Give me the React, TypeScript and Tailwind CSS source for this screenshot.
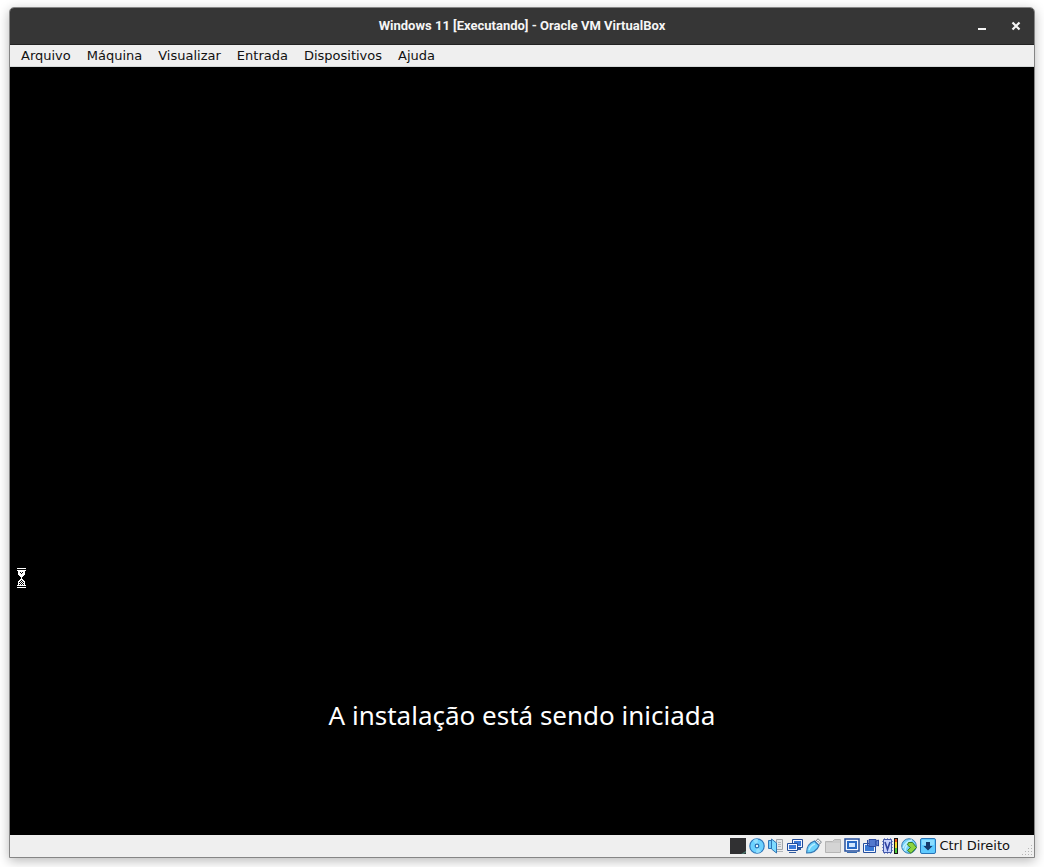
import type { ReactNode } from "react";

const menus = ["Arquivo", "Máquina", "Visualizar", "Entrada", "Dispositivos", "Ajuda"];

function Icon({ children }: { children: ReactNode }) {
  return (
    <svg viewBox="0 0 16 16" className="size-4 block" aria-hidden="true">
      {children}
    </svg>
  );
}

const indicators: { label: string; icon: ReactNode }[] = [
  {
    label: "Discos rígidos",
    icon: (
      <>
        <path d="M0 0h16v16H0z" fill="#303032" />
        <path d="M11 16l5-3v1.500L13.500 16z" fill="#4b7a70" />
      </>
    ),
  },
  {
    label: "Discos ópticos",
    icon: (
      <>
        <circle cx="8" cy="8" r="7.200" fill="#6cd2ff" stroke="#2e79bd" strokeWidth="1.200" />
        <path d="M8 8L4 2.200A7 7 0 0 1 9 1.200zM8 8l4 5.800a7 7 0 0 1-5 1z" fill="#93e0ff" />
        <circle cx="8" cy="8" r="1.800" fill="#eaf7fc" stroke="#286eaf" strokeWidth="1.200" />
      </>
    ),
  },
  {
    label: "Áudio",
    icon: (
      <>
        <path d="M8.500 1.500h6v10h-6z" fill="#e4e6e8" stroke="#a0a4a8" />
        <path d="M10 4.500h3M10 6.500h3M10 8.500h3M9 13.500h6" stroke="#b0b5ba" />
        <path d="M.5 2.500h3v8h-3z" fill="#73cdfa" stroke="#2e75b6" />
        <path d="M3.500 1v10l5 4V5z" fill="#7fdcff" stroke="#2e75b6" />
      </>
    ),
  },
  {
    label: "Rede",
    icon: (
      <>
        <path d="M5.500 1.500h10v8h-10z" fill="#f2f6ff" stroke="#214b98" />
        <path d="M7 3h7v5H7z" fill="#3978d8" />
        <path d="M10 10h4v2h-4z" fill="#315c9f" />
        <path d="M.5 5.500h10v7H.5z" fill="#f2f6ff" stroke="#214b98" />
        <path d="M2 7h7v4H2z" fill="#3978d8" />
        <path d="M2 14.500h7" stroke="#315c9f" />
      </>
    ),
  },
  {
    label: "USB",
    icon: (
      <>
        <path d="M9 4l3-3.300 3.400 3.400-3 3z" fill="#f3f4f5" stroke="#777e86" />
        <path d="M11.500 3l1 1M13 4.500l1 1" stroke="#777e86" />
        <path d="M.7 15C.5 10 3 5 8.500 3l4.500 4.500C11 13 6 15 .7 15z" fill="#6bd2fc" stroke="#3478b4" strokeWidth="1.200" />
        <path d="M3 12c1-3 3-5 6-6" fill="none" stroke="#b6edff" strokeWidth="1.500" />
      </>
    ),
  },
  {
    label: "Pastas compartilhadas",
    icon: (
      <>
        <path d="M.5 14.500v-11h7l2-2h6v13z" fill="#cbcbcb" stroke="#b5b5b5" />
        <path d="M1 5h14v9H1z" fill="#d4d4d4" />
      </>
    ),
  },
  {
    label: "Tela",
    icon: (
      <>
        <path d="M1 1h14v12H1z" fill="#f2f7ff" stroke="#244f9d" strokeWidth="1.500" />
        <path d="M4 4h8v6H4z" fill="#d0e6ff" stroke="#2869c5" strokeWidth="2" />
        <path d="M3 14.500h10" stroke="#3669ad" />
      </>
    ),
  },
  {
    label: "Gravação",
    icon: (
      <>
        <path d="M.5 5.500h12v9H.5z" fill="#f2f6ff" stroke="#244f9d" />
        <path d="M2 7h9v6H2z" fill="#3979d4" />
        <path d="M6 1.500h7v7H6z" fill="#5278cd" stroke="#2848a0" />
        <path d="M13 3l2.500-1v6L13 7zM4.500 2v6" fill="#6688d5" stroke="#2848a0" />
      </>
    ),
  },
  {
    label: "Recursos da CPU",
    icon: (
      <>
        <path d="M0 3.500h11M0 6.500h11M0 9.500h11M0 12.500h11M2.500 0v16M5.500 0v16M8.500 0v16" stroke="#7d8dcd" />
        <path d="M1.500 1.500h8v13h-8z" fill="#c7d2fc" stroke="#4057a8" />
        <path d="M3 4l2.500 7.500L8 4" fill="none" stroke="#3043a0" strokeWidth="1.600" />
        <path d="M12 0h4v16h-4z" fill="#171717" />
        <path d="M13 1h2v5h-2z" fill="#ef5b25" />
        <path d="M13 4h2v6h-2z" fill="#f6d72b" />
        <path d="M13 10h2v5h-2z" fill="#4ac93d" />
      </>
    ),
  },
  {
    label: "Integração do mouse",
    icon: (
      <>
        <circle cx="8" cy="8" r="7.300" fill="#76d2fa" stroke="#3a7db4" />
        <path d="M2 10C4 5 7 3 11 2M4 13C4 9 6 7 8 6" fill="none" stroke="#c3f2ff" strokeWidth="1.500" />
        <path d="M7.500 4.500h4l4 5-5.500 5.800-3.500-2.800L9.500 9.500l-3-2.500z" fill="#8bd440" stroke="#3a7e20" />
      </>
    ),
  },
  {
    label: "Captura do teclado",
    icon: (
      <>
        <rect x=".5" y=".5" width="15" height="15" rx="1.500" fill="#5fcaff" stroke="#2874b6" />
        <path d="M2 2h12v5H2z" fill="#8bdcff" />
        <path d="M6 4h4v4h2.500L8 12.500 3.500 8H6z" fill="#15396c" />
      </>
    ),
  },
];

function Hourglass() {
  return (
    <svg viewBox="0 0 9 20" className="h-5 w-[9px]" shapeRendering="crispEdges" role="img" aria-label="Aguarde">
      <path
        d="M0 0h9v1H0zM0 2h9v1H0zM1 3h7v4H7v1H6v1H5v2h1v1h1v1h1v4H1v-4h1v-1h1v-1h1V9H3V8H2V7H1zM0 17h9v1H0zM0 19h9v1H0z"
        fill="#fff"
      />
      <path
        d="M3 4h1v1H3zM5 4h1v1H5zM4 5h1v1H4zM4 12h1v1H4zM3 13h1v1H3zM5 13h1v1H5zM2 14h1v1H2zM4 14h1v1H4zM6 14h1v1H6zM3 15h1v1H3zM5 15h1v1H5zM2 16h1v1H2zM4 16h1v1H4zM6 16h1v1H6z"
        fill="#000"
      />
    </svg>
  );
}

export default function App() {
  return (
    <div className="flex min-h-screen flex-col bg-white px-[9px] pt-[7px] pb-[9px]">
      <main className="flex flex-1 flex-col overflow-hidden rounded-t-[5px] border border-[#858585] bg-[#efefef] shadow-[0_3px_12px_rgba(0,0,0,0.28)]">
        <header className="grid h-[37px] grid-cols-[1fr_auto_1fr] items-center border-b border-[#222222] bg-[#363636] text-[#f5f5f5]">
          <h1 className="col-start-2 font-['Roboto',sans-serif] text-[13px] leading-5 font-bold">
            Windows 11 [Executando] - Oracle VM VirtualBox
          </h1>
          <div className="flex justify-end gap-2.5 pr-1.5">
            <button type="button" aria-label="Minimizar" className="flex size-6 items-center justify-center">
              <svg viewBox="0 0 12 12" className="size-3">
                <path d="M2 8h8v2H2z" fill="currentColor" />
              </svg>
            </button>
            <button type="button" aria-label="Fechar" className="flex size-6 items-center justify-center">
              <svg viewBox="0 0 12 12" className="size-3">
                <path d="M2.500 2.500l7 7m0-7l-7 7" stroke="currentColor" strokeWidth="2.200" />
              </svg>
            </button>
          </div>
        </header>

        <nav
          aria-label="Menu principal"
          className="flex h-[22px] items-center border-b border-[#d5d9d9] px-[3px] font-['DejaVu_Sans',sans-serif] text-[13px] text-[#111111]"
        >
          {menus.map((menu) => (
            <button type="button" key={menu} className="px-2 leading-5">
              {menu}
            </button>
          ))}
        </nav>

        <section className="flex flex-1 flex-col justify-end bg-black">
          <div className="pb-[107px] pl-[7px]">
            <Hourglass />
          </div>
          <p className="pb-[100px] text-center font-['Noto_Sans',sans-serif] text-[26px] leading-10 text-white">
            A instalação está sendo iniciada
          </p>
        </section>

        <footer className="flex h-[22px] items-center justify-end font-['DejaVu_Sans',sans-serif] text-[13px] text-[#111111]">
          <div className="flex items-center gap-[3px]">
            {indicators.map(({ label, icon }) => (
              <button type="button" key={label} aria-label={label}>
                <Icon>{icon}</Icon>
              </button>
            ))}
            <span className="leading-5">Ctrl Direito</span>
          </div>
          <svg viewBox="0 0 12 12" className="ml-3 size-3 self-end" aria-hidden="true">
            <path
              d="M9 0h1v1H9zM6 3h1v1H6zM9 3h1v1H9zM3 6h1v1H3zM6 6h1v1H6zM9 6h1v1H9zM0 9h1v1H0zM3 9h1v1H3zM6 9h1v1H6zM9 9h1v1H9z"
              fill="#b5b5b5"
            />
          </svg>
        </footer>
      </main>
    </div>
  );
}
